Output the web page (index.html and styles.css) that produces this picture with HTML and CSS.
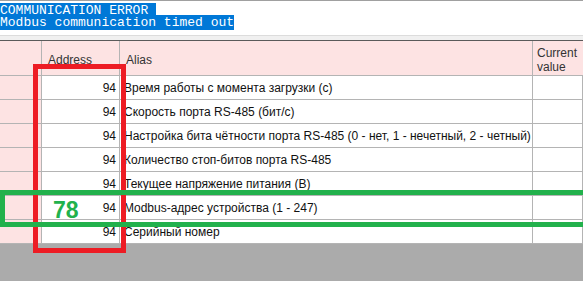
FILE: index.html
```html
<!DOCTYPE html>
<html>
<head>
  <title>Modbus registers</title>
  <link rel="stylesheet" href="styles.css">
</head>
<body>
  <div class="console">
    <div><span class="sel">COMMUNICATION ERROR </span></div>
    <div><span class="sel">Modbus communication timed out</span></div>
  </div>
  <div class="divider"></div>

  <div class="grid">
    <div class="cell head rowhead"></div>
    <div class="cell head">Address</div>
    <div class="cell head">Alias</div>
    <div class="cell head last">Current value</div>

    <div class="cell rowhead"></div>
    <div class="cell num">94</div>
    <div class="cell">Время работы с момента загрузки (с)</div>
    <div class="cell"></div>

    <div class="cell rowhead"></div>
    <div class="cell num">94</div>
    <div class="cell">Скорость порта RS-485 (бит/с)</div>
    <div class="cell"></div>

    <div class="cell rowhead"></div>
    <div class="cell num">94</div>
    <div class="cell">Настройка бита чётности порта RS-485 (0 - нет, 1 - нечетный, 2 - четный)</div>
    <div class="cell"></div>

    <div class="cell rowhead"></div>
    <div class="cell num">94</div>
    <div class="cell">Количество стоп-битов порта RS-485</div>
    <div class="cell"></div>

    <div class="cell rowhead"></div>
    <div class="cell num">94</div>
    <div class="cell">Текущее напряжение питания (В)</div>
    <div class="cell"></div>

    <div class="cell rowhead"></div>
    <div class="cell num">94</div>
    <div class="cell">Modbus-адрес устройства (1 - 247)</div>
    <div class="cell"></div>

    <div class="cell rowhead"></div>
    <div class="cell num">94</div>
    <div class="cell">Серийный номер</div>
    <div class="cell"></div>
  </div>

  <!-- annotations drawn over the screenshot -->
  <div class="mark-red"></div>
  <div class="mark-green"></div>
  <div class="mark-label">78</div>
</body>
</html>
```

FILE: styles.css
```css
html, body {
  margin: 0;
  height: 100%;
}
body {
  background-color: #ababab;
  overflow: hidden;
  position: relative;
  font-family: "Liberation Sans", Arial, sans-serif;
}

.console {
  background-color: white;
  border-top: 1px solid #a0a0a0;
  height: 30px;
  padding-top: 4px;
  font-family: "Liberation Mono", "Courier New", monospace;
  font-size: 13px;
  line-height: 12px;
}
.sel {
  background-color: #0078d7;
  color: white;
  white-space: pre;
}

.divider {
  height: 4px;
  border-top: 1px solid #dcdcdc;
  background-color: #f0f0f0;
  border-bottom: 1px solid #5a5a5a;
}

.grid {
  display: grid;
  grid-template-columns: 42px 78px 413px 50px;
  grid-template-rows: 35px;
  grid-auto-rows: 24px;
  background-color: white;
  font-size: 12px;
  color: #111;
}
.cell {
  border-right: 1px solid #b4b4b4;
  border-bottom: 1px solid #b4b4b4;
  display: flex;
  align-items: center;
  padding-left: 4px;
  white-space: nowrap;
  overflow: hidden;
}
.head {
  background-color: #fde3e3;
  padding-left: 6px;
  padding-top: 4px;
  color: #333;
  white-space: normal;
  line-height: 14px;
}
.head.last {
  padding-left: 4px;
  border-right: none;
}
.rowhead {
  background-color: #fde3e3;
}
.num {
  justify-content: flex-end;
  padding-right: 3px;
}

.mark-red {
  position: absolute;
  left: 33px;
  top: 64px;
  width: 83px;
  height: 179px;
  border: 5px solid #ed1c24;
}
.mark-green {
  position: absolute;
  left: 0;
  top: 190px;
  width: 600px;
  height: 27px;
  border: 5px solid #22b14c;
}
.mark-label {
  position: absolute;
  left: 53px;
  top: 197px;
  font-size: 23px;
  font-weight: bold;
  color: #22b14c;
}
```
